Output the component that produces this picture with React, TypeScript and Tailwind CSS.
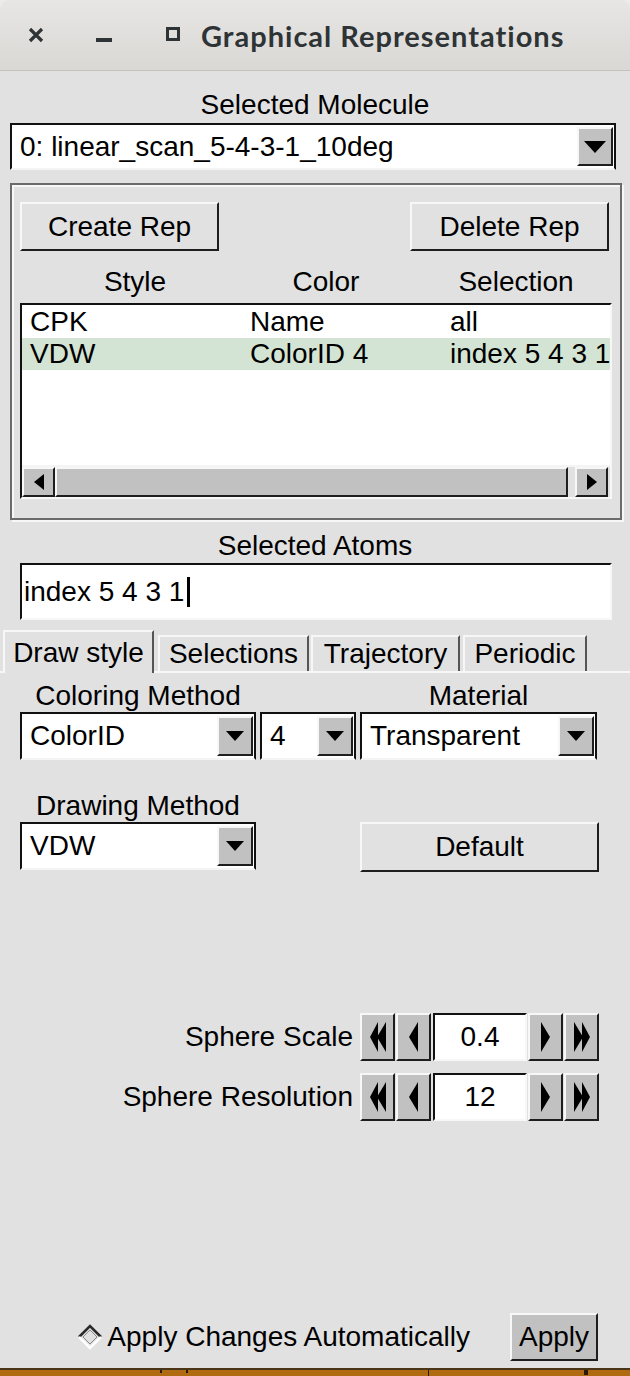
import React from 'react';

// Tk-style reliefs
const raised = 'border-2 border-t-[#f7f7f7] border-l-[#f7f7f7] border-r-[#1e1e1e] border-b-[#1e1e1e]';
const sunken = 'border-2 border-t-[#111] border-l-[#111] border-r-[#f7f7f7] border-b-[#f7f7f7]';

function DownArrow({ w = 18, h = 10 }: { w?: number; h?: number }) {
  return (
    <svg width={w} height={h}>
      <polygon points={`0,0 ${w},0 ${w / 2},${h}`} fill="#000" />
    </svg>
  );
}

function Dropdown({ value, className, big }: { value: string; className: string; big?: boolean }) {
  return (
    <div
      className={`flex items-stretch bg-white border-2 border-t-[#111] border-l-[#111] border-r-[#111] border-b-[#f4f4f4] ${className}`}
    >
      <div className="flex-1 flex items-center pl-[8px] whitespace-nowrap overflow-hidden">{value}</div>
      <div className={`my-[2px] mr-[1px] w-[36px] flex items-center justify-center bg-[#c1c1c1] ${raised}`}>
        {big ? <DownArrow w={22} h={12} /> : <DownArrow />}
      </div>
    </div>
  );
}

function Button({ children, className }: { children: React.ReactNode; className: string }) {
  return (
    <div className={`flex items-center justify-center ${raised} ${className}`}>{children}</div>
  );
}

function Tri({ dir, double }: { dir: 'l' | 'r'; double?: boolean }) {
  const one = dir === 'l' ? '9,0 9,30 0,15' : '0,0 0,30 9,15';
  if (!double) {
    return (
      <svg width="9" height="30">
        <polygon points={one} fill="#000" />
      </svg>
    );
  }
  return (
    <svg width="16" height="30">
      {dir === 'l' ? (
        <>
          <polygon points="8,0 8,30 0,15" fill="#000" />
          <polygon points="16,0 16,30 7,15" fill="#000" />
        </>
      ) : (
        <>
          <polygon points="0,0 0,30 9,15" fill="#000" />
          <polygon points="8,0 8,30 16,15" fill="#000" />
        </>
      )}
    </svg>
  );
}

function SpinBtn({ children, className = '' }: { children: React.ReactNode; className?: string }) {
  return (
    <div className={`w-[35px] h-full flex items-center justify-center bg-[#c1c1c1] ${raised} ${className}`}>
      {children}
    </div>
  );
}

function Spinner({ label, value, className = '' }: { label: string; value: string; className?: string }) {
  return (
    <div className={`h-[48px] flex items-center justify-end pr-[31px] ${className}`}>
      <span className="mr-[7px]">{label}</span>
      <SpinBtn>
        <Tri dir="l" double />
      </SpinBtn>
      <SpinBtn className="ml-[1px]">
        <Tri dir="l" />
      </SpinBtn>
      <div className={`ml-[2px] w-[94px] h-full bg-white flex items-center justify-center ${sunken}`}>{value}</div>
      <SpinBtn className="ml-[1px]">
        <Tri dir="r" />
      </SpinBtn>
      <SpinBtn className="ml-[1px]">
        <Tri dir="r" double />
      </SpinBtn>
    </div>
  );
}

const tabs = [
  { name: 'Draw style', w: 'w-[151px] ml-[3px]', active: true },
  { name: 'Selections', w: 'w-[151px] ml-[4px]' },
  { name: 'Trajectory', w: 'w-[149px] ml-[2px]' },
  { name: 'Periodic', w: 'w-[124px] ml-[3px]' },
];

export default function App() {
  return (
    <div className="w-[630px] h-[1376px] flex flex-col bg-[#ebebeb] font-['Liberation_Sans',Arial,sans-serif] text-[28px] text-black overflow-hidden">
      <div className="h-[1368px] shrink-0 flex flex-col bg-[#e1e1e1] rounded-t-[10px] overflow-hidden">
        {/* Title bar */}
        <header className="h-[71px] shrink-0 flex items-center pl-[28px] border-b border-[#c5c1bc] bg-linear-to-b from-[#e8e6e4] to-[#dad8d5] text-[#2e3436]">
          <svg width="16" height="16">
            <path d="M2 2 L14 14 M14 2 L2 14" stroke="#2e3436" strokeWidth="3.2" />
          </svg>
          <svg width="16" height="16" className="ml-[52px]">
            <rect x="0" y="11" width="16" height="4" fill="#2e3436" />
          </svg>
          <svg width="14" height="14" className="ml-[54px] -mt-[3px]">
            <rect x="1.5" y="1.5" width="11" height="11" fill="none" stroke="#2e3436" strokeWidth="3" />
          </svg>
          <span className="ml-[21px] font-['Lato',sans-serif] font-bold text-[29px] tracking-[1px] leading-none">
            Graphical Representations
          </span>
        </header>

        {/* Molecule chooser */}
        <p className="mt-[17px] h-[34px] leading-[34px] text-center">Selected Molecule</p>
        <Dropdown big value="0: linear_scan_5-4-3-1_10deg" className="mt-[1px] ml-[10px] w-[606px] h-[47px]" />

        {/* Reps frame */}
        <section className="mt-[13px] ml-[10px] w-[612px] h-[337px] shrink-0 border-2 border-[#6b6b6b] shadow-[inset_2px_2px_0_#f7f7f7,2px_2px_0_#f7f7f7] flex flex-col">
          <div className="mt-[17px] flex justify-between pl-[8px] pr-[11px]">
            <Button className="w-[199px] h-[49px]">Create Rep</Button>
            <Button className="w-[199px] h-[49px]">Delete Rep</Button>
          </div>
          <div className="mt-[14px] h-[34px] flex items-center pl-[8px] whitespace-nowrap">
            <span className="w-[230px] shrink-0 text-center">Style</span>
            <span className="w-[152px] shrink-0 text-center">Color</span>
            <span className="w-[228px] shrink-0 text-center">Selection</span>
          </div>
          <div className={`mt-[4px] ml-[8px] w-[592px] h-[196px] bg-white flex flex-col ${sunken}`}>
            <div className="h-[33px] flex items-center pl-[8px] whitespace-nowrap">
              <span className="w-[220px] shrink-0">CPK</span>
              <span className="w-[200px] shrink-0">Name</span>
              <span>all</span>
            </div>
            <div className="h-[32px] flex items-center pl-[8px] bg-[#d4e4d4] whitespace-nowrap overflow-hidden">
              <span className="w-[220px] shrink-0">VDW</span>
              <span className="w-[200px] shrink-0">ColorID 4</span>
              <span>index 5 4 3 1</span>
            </div>
            <div className="flex-1" />
            <div className="h-[32px] flex bg-[#e1e1e1] border-t-2 border-[#f4f4f4]">
              <div className={`w-[33px] flex items-center justify-center bg-[#c1c1c1] ${raised}`}>
                <svg width="10" height="16">
                  <polygon points="10,0 10,16 0,8" fill="#000" />
                </svg>
              </div>
              <div className={`flex-1 bg-[#c1c1c1] ${raised}`} />
              <div className="w-[7px]" />
              <div className={`w-[33px] flex items-center justify-center bg-[#c1c1c1] ${raised}`}>
                <svg width="10" height="16">
                  <polygon points="0,0 0,16 10,8" fill="#000" />
                </svg>
              </div>
              <div className="w-[2px]" />
            </div>
          </div>
        </section>

        {/* Selected atoms */}
        <p className="mt-[9px] h-[34px] leading-[34px] text-center">Selected Atoms</p>
        <div className={`ml-[20px] w-[592px] h-[57px] shrink-0 bg-white flex items-center pl-[2px] ${sunken}`}>
          <span>index 5 4 3 1</span>
          <span className="ml-[3px] w-[3px] h-[30px] bg-black" />
        </div>

        {/* Tabs */}
        <div className="mt-[12px] h-[41px] shrink-0 flex items-end border-b-2 border-[#f7f7f7]">
          {tabs.map((t) => (
            <div
              key={t.name}
              className={`${t.w} flex items-center justify-center border-t-2 border-l-2 border-r-2 border-t-[#f7f7f7] border-l-[#f7f7f7] border-r-[#555] whitespace-nowrap ${
                t.active ? 'h-[43px] -mb-[2px] bg-[#e1e1e1] relative' : 'h-[36px]'
              }`}
            >
              {t.name}
            </div>
          ))}
        </div>

        {/* Draw style page */}
        <div className="flex-1 flex flex-col">
          <div className="mt-[7px] h-[32px] flex items-center pl-[20px] whitespace-nowrap">
            <span className="w-[236px] text-center">Coloring Method</span>
            <span className="ml-[104px] w-[237px] text-center">Material</span>
          </div>
          <div className="flex pl-[20px]">
            <Dropdown value="ColorID" className="w-[236px] h-[48px]" />
            <Dropdown value="4" className="ml-[4px] w-[96px] h-[48px]" />
            <Dropdown value="Transparent" className="ml-[4px] w-[237px] h-[48px]" />
          </div>
          <div className="mt-[30px] h-[32px] flex items-center pl-[20px]">
            <span className="w-[236px] text-center">Drawing Method</span>
          </div>
          <div className="flex items-start pl-[20px]">
            <Dropdown value="VDW" className="w-[236px] h-[48px]" />
            <Button className="ml-[104px] w-[239px] h-[50px]">Default</Button>
          </div>

          <Spinner label="Sphere Scale" value="0.4" className="mt-[141px]" />
          <Spinner label="Sphere Resolution" value="12" className="mt-[12px]" />

          <div className="mt-auto mb-[7px] h-[48px] flex items-center justify-end pr-[32px]">
            <svg width="26" height="26">
              <polygon points="13,1 25,13 13,25 1,13" fill="#e1e1e1" />
              <polyline points="2,13 13,2 24,13" fill="none" stroke="#2a2a2a" strokeWidth="2.5" />
              <polyline points="2,13 13,24 24,13" fill="none" stroke="#ffffff" strokeWidth="2.5" />
              <polyline points="6,13 13,6 20,13 13,20 6,13" fill="none" stroke="#8a8a8a" strokeWidth="1" />
            </svg>
            <span className="ml-[4px]">Apply Changes Automatically</span>
            <Button className="ml-[40px] w-[88px] h-[48px] bg-[#c1c1c1]">Apply</Button>
          </div>
        </div>
      </div>

      {/* desktop behind the window */}
      <div className="h-[2px] shrink-0 bg-[#4a3516]" />
      <div className="flex-1 flex items-start bg-[#b06a12]">
        <span className="ml-[160px] w-[28px] h-[3px] border-x-2 border-[#2a1a05]" />
        <span className="ml-[240px] w-[1px] h-[6px] bg-[#2a1a05]" />
        <span className="ml-[155px] w-[4px] h-[5px] bg-[#2a1a05]" />
      </div>
    </div>
  );
}
